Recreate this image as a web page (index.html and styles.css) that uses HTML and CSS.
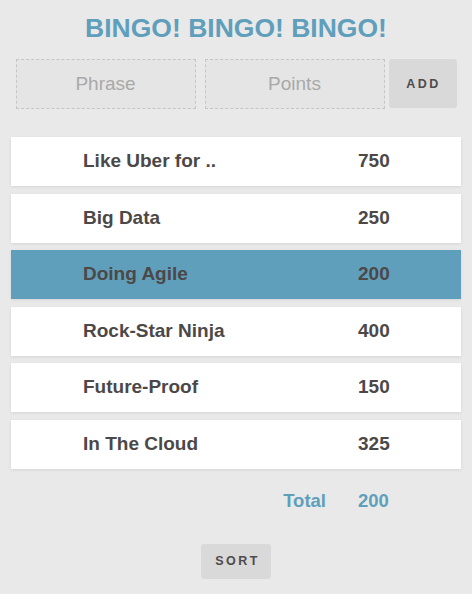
FILE: index.html
```html
<!DOCTYPE html>
<html>
<head>
<meta charset="utf-8">
<link rel="stylesheet" href="styles.css">
</head>
<body>
<main class="app">
  <h1 class="title">BINGO! BINGO! BINGO!</h1>
  <form class="add-form">
    <input class="field" type="text" placeholder="Phrase">
    <input class="field" type="text" placeholder="Points">
    <button class="btn btn-add" type="button">ADD</button>
  </form>
  <ul class="list">
    <li class="row"><span class="phrase">Like Uber for ..</span><span class="points">750</span></li>
    <li class="row"><span class="phrase">Big Data</span><span class="points">250</span></li>
    <li class="row row-selected"><span class="phrase">Doing Agile</span><span class="points">200</span></li>
    <li class="row"><span class="phrase">Rock-Star Ninja</span><span class="points">400</span></li>
    <li class="row"><span class="phrase">Future-Proof</span><span class="points">150</span></li>
    <li class="row"><span class="phrase">In The Cloud</span><span class="points">325</span></li>
    <li class="row row-total"><span class="phrase">Total</span><span class="points">200</span></li>
  </ul>
  <div class="actions">
    <button class="btn btn-sort" type="button">SORT</button>
  </div>
</main>
</body>
</html>
```

FILE: styles.css
```css
html, body {
  margin: 0;
  padding: 0;
  background: #e9e9e9;
}

body {
  font-family: "Liberation Sans", Arial, Helvetica, sans-serif;
  color: #4c4848;
}

.app {
  width: 472px;
  display: flex;
  flex-direction: column;
  align-items: center;
}

.title {
  margin: 13px 0 0;
  font-size: 26.5px;
  line-height: 30px;
  font-weight: bold;
  color: #609fbc;
  text-align: center;
}

.add-form {
  margin: 16px 0 0;
  display: flex;
  align-items: flex-start;
}

.field {
  box-sizing: border-box;
  width: 180px;
  height: 50px;
  margin: 0 9px 0 0;
  padding: 0;
  border: 1px dashed #c6c6c6;
  background: #e5e5e5;
  font-family: "Liberation Sans", Arial, sans-serif;
  font-size: 19px;
  color: #4c4848;
  text-align: center;
  outline: none;
}

.field:nth-of-type(2) {
  margin-right: 4px;
}

.field::placeholder {
  color: #a9a9a9;
}

.btn {
  border: none;
  border-radius: 3px;
  background: #d9d9d9;
  font-family: "Liberation Sans", Arial, sans-serif;
  font-weight: bold;
  font-size: 12.5px;
  letter-spacing: 2.5px;
  color: #4f4b4b;
  padding: 0;
  cursor: pointer;
}

.btn-add {
  width: 68px;
  height: 49px;
  padding-left: 2px;
}

.list {
  list-style: none;
  margin: 28px 0 0;
  padding: 0;
  width: 450px;
  display: flex;
  flex-direction: column;
  gap: 7.6px;
}

.row {
  height: 49px;
  box-sizing: border-box;
  padding: 0 0 1px 72px;
  display: grid;
  grid-template-columns: 275px 1fr;
  align-items: center;
  background: #ffffff;
  box-shadow: 0 1px 3px rgba(0, 0, 0, 0.09);
  font-size: 19px;
  font-weight: bold;
}

.row-selected {
  background: #609fbc;
}

.row-total {
  background: transparent;
  box-shadow: none;
  color: #609fbc;
  font-size: 18.5px;
}

.row-total .phrase {
  text-align: right;
  padding-right: 32px;
}

.actions {
  margin-top: 18px;
  display: flex;
  justify-content: center;
}

.btn-sort {
  width: 70px;
  height: 35px;
  padding-left: 3px;
}
```
